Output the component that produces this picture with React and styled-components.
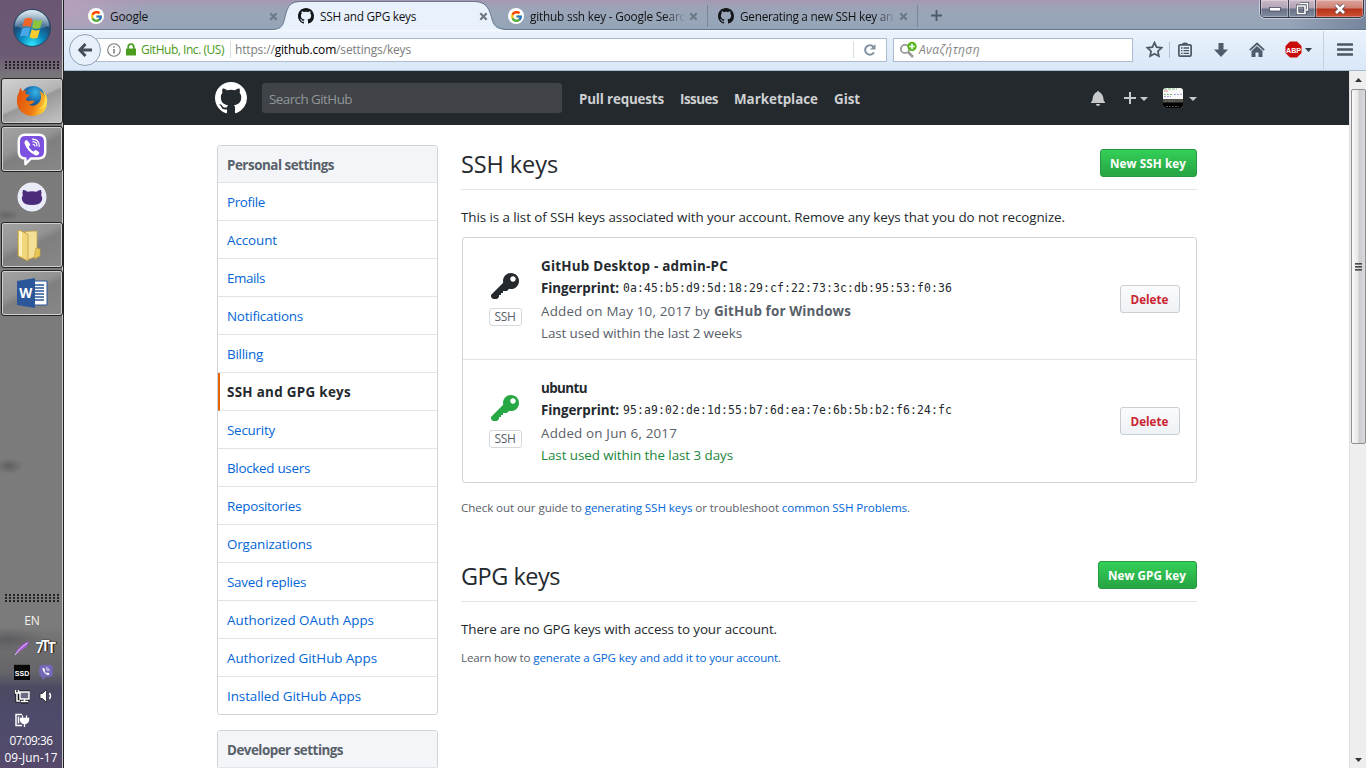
import React, { useLayoutEffect, useRef, useState } from "react";
import styled, { createGlobalStyle, css } from "styled-components";
import { FcGoogle } from "react-icons/fc";

const GlobalStyle = createGlobalStyle`
  * { box-sizing: border-box; }
  html, body { margin: 0; padding: 0; background: #fff; }
  body { font-family: "Open Sans", "Noto Sans", sans-serif; font-size: 13.4px; color: #24292e; overflow: hidden; }
`;

/* Text run whose tracking is adjusted so that it fills a set width. */
const Run = styled.span`
  display: inline-block;
  white-space: nowrap;
`;
function Fit({ w, children, ...rest }) {
  const ref = useRef(null);
  const [spacing, setSpacing] = useState(0);
  useLayoutEffect(() => {
    const el = ref.current;
    el.style.letterSpacing = "0px";
    const natural = el.getBoundingClientRect().width;
    const value = (w - natural) / el.textContent.length;
    el.style.letterSpacing = `${value}px`;
    setSpacing(value);
  }, [w, children]);
  return (
    <Run ref={ref} style={{ letterSpacing: spacing }} {...rest}>
      {children}
    </Run>
  );
}

const Screen = styled.div`
  display: flex;
  width: 1366px;
  height: 768px;
  overflow: hidden;
`;

/* ---------- Taskbar ---------- */
const Taskbar = styled.aside`
  display: flex;
  flex-direction: column;
  align-items: center;
  flex: none;
  width: 64px;
  height: 768px;
  border-right: 1px solid #222;
  box-shadow: inset -1px 0 0 #c9c9c9;
  padding-left: 1px;
  background:
    radial-gradient(ellipse 14px 8px at 9px 466px, #606060, transparent),
    radial-gradient(ellipse 40px 12px at 8px 640px, #5e5c5f, transparent),
    radial-gradient(ellipse 14px 6px at 6px 215px, #666, transparent),
    linear-gradient(#695673 0, #6b5a74 55px, #787379 74px, #7b7b7b 90px, #7b7b7b 625px, #6d6d6f 650px, #65656a 672px, #4a4a62 688px, #4c4b6b 715px, #56496b 768px);
`;
const StartOrb = styled.div`
  height: 61px;
  padding-top: 9px;
`;
const Grip = styled.div`
  width: 54px;
  height: 9px;
  flex: none;
  background-image: radial-gradient(circle at 1px 1px, #262328 1px, transparent 1.4px);
  background-size: 4px 3px;
  margin-bottom: ${(p) => p.$gap || 0}px;
`;
const Task = styled.div`
  display: flex;
  align-items: center;
  justify-content: center;
  flex: none;
  width: 62px;
  height: 46px;
  margin-bottom: 2px;
  border-radius: 3px;
  ${(p) =>
    p.$open &&
    css`
      border: 1px solid #262626;
      box-shadow: inset 0 0 0 1px #cfcfcf;
      background: ${p.$active
        ? "linear-gradient(155deg, #d2d2d2 0, #b4b4b4 48%, #989898 52%, #c4c4c4 100%)"
        : "linear-gradient(155deg, #a4a4a4 0, #939393 40%, #7f7f7f 52%, #888 100%)"};
    `}
`;
const TaskGap = styled.div`
  flex: 1;
`;
const Lang = styled.div`
  height: 33px;
  line-height: 36px;
  font-size: 12px;
  color: #f4f1ea;
`;
const Tray = styled.div`
  display: grid;
  grid-template-columns: 24px 24px;
  grid-auto-rows: 24px;
  place-items: center;
  margin-left: 4px;
`;
const Clock = styled.div`
  height: 36px;
  margin-right: 2px;
  font-size: 11.8px;
  line-height: 17px;
  color: #fff;
  text-align: center;
  white-space: nowrap;
`;
const SsdChip = styled.div`
  width: 16px;
  height: 16px;
  background: #080808;
  border-top: 1px solid #555;
  color: #fff;
  font: bold 7px/17px "Liberation Sans", sans-serif;
  text-align: center;
`;
const SevenTT = styled.div`
  color: #fff;
  font: bold 14px/16px "Roboto", sans-serif;
  letter-spacing: -2.4px;
  margin-left: -3px;
  text-shadow: 0 0 1px #000, 1px 0 1px #000;
  span { display: inline-block; transform: translateY(${(p) => p.$lift || 0}px); }
`;

/* ---------- Browser chrome ---------- */
const Browser = styled.div`
  display: flex;
  flex-direction: column;
  flex: 1;
  min-width: 0;
`;
const TabBar = styled.div`
  display: flex;
  height: 30px;
  flex: none;
  padding-left: 14px;
  border-bottom: 1px solid #66788e;
  background:
    radial-gradient(ellipse 90px 50px at 0 8px, #b7a0bb, transparent),
    linear-gradient(90deg, transparent 94%, rgba(60, 75, 105, 0.35)),
    linear-gradient(#a697b2 0, #9ea0b6 5px, #9aa5b8 12px, #94a5b8 29px);
`;
const TabBox = styled.div`
  position: relative;
  display: flex;
  align-items: center;
  width: 210px;
  height: 30px;
  padding: 2px 0 0 10px;
  font-size: 11.8px;
  color: #111;
  ${(p) =>
    p.$separator &&
    css`
      &::after {
        content: "";
        width: 1px;
        height: 22px;
        background: #76879a;
        margin-left: 9px;
      }
    `}
`;
const TabShape = styled.svg`
  position: absolute;
  left: -16px;
  top: 0;
`;
const TabIcon = styled.div`
  position: relative;
  display: flex;
  align-items: center;
  justify-content: center;
  width: 16px;
  height: 16px;
  border-radius: 8px;
  background: ${(p) => (p.$disc ? "#fff" : "transparent")};
`;
const TabTitle = styled.div`
  position: relative;
  width: 156px;
  margin-left: 6px;
  white-space: nowrap;
  line-height: 18px;
  margin-top: -1px;
  ${(p) => p.$fade && css`mask-image: linear-gradient(90deg, #000 86%, transparent 100%);`}
`;
const CloseIcon = styled.svg`
  position: relative;
  margin-left: 3px;
`;
const NewTab = styled.div`
  display: flex;
  align-items: center;
  padding: 2px 0 0 13px;
`;
const WindowControls = styled.div`
  display: flex;
  margin-left: auto;
  margin-right: 2px;
  height: 18px;
  border: 1px solid #33394a;
  border-top: 0;
  border-radius: 0 0 5px 5px;
  overflow: hidden;
  box-shadow: 0 0 0 1px rgba(255, 255, 255, 0.45);
`;
const WinButton = styled.div`
  display: flex;
  align-items: center;
  justify-content: center;
  width: ${(p) => p.$w}px;
  border-right: ${(p) => (p.$close ? "0" : "1px solid #3c4252")};
  box-shadow: inset 0 0 0 1px rgba(255, 255, 255, 0.3);
  background: ${(p) =>
    p.$close
      ? "linear-gradient(#dda39c 0, #cf8175 8px, #b8321b 9px, #cb5332 100%)"
      : "linear-gradient(#ccb8c7 0, #b0a5b5 8px, #6b7186 9px, #7f8ba0 100%)"};
`;

const NavBar = styled.div`
  display: flex;
  align-items: center;
  height: 41px;
  flex: none;
  padding: 0 0 1px 5px;
  background: linear-gradient(#f7fbff 0, #e9f2fc 2px, #d9e7f8 100%);
  border-bottom: 1px solid #a6bad0;
`;
const Back = styled.div`
  position: relative;
  z-index: 1;
  flex: none;
  display: flex;
  align-items: center;
  justify-content: center;
  width: 32px;
  height: 32px;
  border: 1px solid #8fa1b6;
  border-radius: 50%;
  background: #e8f1fb;
`;
const UrlBox = styled.div`
  display: flex;
  align-items: center;
  flex: none;
  width: 791px;
  height: 24px;
  margin-left: -5px;
  padding-left: 10px;
  background: #fff;
  border: 1px solid #a9bcd1;
  font-size: 12px;
  line-height: 20px;
  color: #7c7c7c;
`;
const Identity = styled.div`
  display: flex;
  align-items: center;
  color: #4a9a21;
  margin-right: 6px;
  gap: 5px;
`;
const Rule = styled.div`
  flex: none;
  width: 1px;
  height: ${(p) => p.$h}px;
  background: ${(p) => p.$c || "#d8dde3"};
`;
const Address = styled.div`
  flex: 1;
  padding: 1px 0 0 4px;
  b { font-weight: 400; color: #000; }
`;
const Reload = styled.div`
  display: flex;
  width: 32px;
  justify-content: center;
`;
const SearchBox = styled.div`
  display: flex;
  align-items: center;
  flex: none;
  width: 240px;
  height: 24px;
  margin-left: 6px;
  padding-left: 5px;
  background: #fff;
  border: 1px solid #a9bcd1;
  color: #858585;
  font-size: 12px;
  font-style: italic;
`;
const Tools = styled.div`
  display: flex;
  align-items: center;
  flex: none;
  height: 40px;
  padding-left: 12px;
  svg { display: block; }
`;
const Tool = styled.div`
  flex: none;
  width: ${(p) => p.$w || 18}px;
  margin-right: ${(p) => p.$r || 0}px;
  display: flex;
  align-items: center;
  justify-content: center;
`;

/* ---------- Page ---------- */
const Viewport = styled.div`
  display: flex;
  flex: 1;
  min-height: 0;
`;
const Page = styled.div`
  width: 1285px;
  height: 697px;
  overflow: hidden;
  background: #fff;
`;
const Header = styled.header`
  display: flex;
  align-items: center;
  height: 54px;
  padding: 0 152px 0 151px;
  background: #24292e;
`;
const HeaderSearch = styled.div`
  width: 300px;
  height: 30px;
  margin-left: 15px;
  padding-left: 7px;
  border-radius: 3px;
  background: #404448;
  color: #939699;
  line-height: 32px;
`;
const HeaderNav = styled.nav`
  display: flex;
  gap: 16px;
  margin-left: 17px;
  padding-top: 2px;
  font-weight: 700;
  color: #ced0d1;
`;
const HeaderUser = styled.div`
  display: flex;
  align-items: center;
  margin-left: auto;
  svg { display: block; }
`;
const AddIcon = styled.svg`
  margin-left: 19px;
`;
const Caret = styled.div`
  width: 0;
  border: 4px solid transparent;
  border-top-color: #c8c9cb;
  border-bottom: 0;
  margin-left: ${(p) => p.$l}px;
  margin-top: 1px;
`;
const Columns = styled.div`
  display: flex;
  padding: 20px 152px 0 153px;
`;
const Sidebar = styled.div`
  width: 221px;
  flex: none;
`;
const Menu = styled.div`
  border: 1px solid #d1d5da;
  border-radius: 3px;
  margin-bottom: 15px;
  overflow: hidden;
`;
const MenuHeading = styled.div`
  height: 37px;
  padding-left: 9px;
  line-height: 38px;
  font-weight: 700;
  color: #586069;
  background: #f3f5f8;
  border-bottom: 1px solid #e1e4e8;
`;
const MenuItem = styled.div`
  height: 38px;
  line-height: 38px;
  padding-left: ${(p) => (p.$current ? 7 : 9)}px;
  border-left: ${(p) => (p.$current ? "2px solid #e36209" : "0")};
  border-bottom: 1px solid #e1e4e8;
  color: ${(p) => (p.$current ? "#24292e" : "#0366d6")};
  font-weight: ${(p) => (p.$current ? 700 : 400)};
  &:last-child { border-bottom: 0; height: 37px; }
`;
const Main = styled.main`
  width: 736px;
  margin-left: 23px;
`;
const Subhead = styled.div`
  display: flex;
  align-items: flex-start;
  justify-content: space-between;
  height: 45px;
  padding-top: 4px;
  border-bottom: 1px solid #e1e4e8;
  margin-top: ${(p) => p.$top || 0}px;
`;
const Title = styled.h2`
  margin: 0;
  font-size: 23.5px;
  line-height: 31px;
  font-weight: 400;
`;
const Button = styled.div`
  width: ${(p) => p.$w}px;
  height: 28px;
  padding-right: 1px;
  text-align: center;
  line-height: 26px;
  font-size: 11.7px;
  font-weight: 700;
  border-radius: 3px;
  ${(p) =>
    p.$danger
      ? css`
          color: #cb2431;
          border: 1px solid #c9cdd1;
          background: linear-gradient(#fafbfc, #eff3f6 90%);
        `
      : css`
          color: #fff;
          border: 1px solid #269a41;
          background: linear-gradient(#34d058, #28a745 90%);
        `}
`;
const Paragraph = styled.p`
  margin: ${(p) => p.$top}px 0 0;
  line-height: 20px;
`;
const Note = styled.p`
  margin: ${(p) => p.$top}px 0 0;
  font-size: 11.6px;
  line-height: 18px;
  color: #586069;
  white-space: pre;
`;
const Link = styled.span`
  color: #0366d6;
`;
const KeyList = styled.div`
  margin: 10px 0 0 1px;
  border: 1px solid #d1d5da;
  border-radius: 3px;
`;
const KeyRow = styled.div`
  display: flex;
  height: ${(p) => p.$h}px;
  padding: 17px 16px 0 26px;
  & + & { border-top: 1px solid #e1e4e8; }
`;
const KeyKind = styled.div`
  display: flex;
  flex-direction: column;
  align-items: center;
  width: 33px;
  padding-top: 16px;
  svg { display: block; margin-right: 2px; }
`;
const KindBadge = styled.div`
  width: 33px;
  height: 18px;
  padding-right: 1px;
  margin-top: 5px;
  border: 1px solid #d5d8dc;
  border-radius: 3px;
  color: #586069;
  font-size: 12px;
  line-height: 16px;
  text-align: center;
`;
const KeyText = styled.div`
  flex: 1;
  margin-left: 19px;
  line-height: 22.3px;
`;
const KeyLine = styled.div`
  display: flex;
  gap: 4px;
  height: 22.3px;
  color: ${(p) => p.$color || "#586069"};
  font-weight: ${(p) => (p.$bold ? 700 : 400)};
`;
const Hash = styled.code`
  font-family: "DejaVu Sans Mono", monospace;
  font-size: 11.4px;
`;
const RowAction = styled.div`
  padding-top: 30px;
`;

const Scrollbar = styled.div`
  display: flex;
  flex-direction: column;
  align-items: center;
  width: 17px;
  background: #eeeeef;
  border-left: 1px solid #e0e0e2;
`;
const ScrollArrow = styled.div`
  display: flex;
  align-items: center;
  justify-content: center;
  height: 17px;
`;
const Thumb = styled.div`
  display: flex;
  flex-direction: column;
  align-items: center;
  justify-content: center;
  gap: 1px;
  width: 15px;
  height: 355px;
  margin-top: 1px;
  border: 1px solid #8f8f92;
  border-radius: 2px;
  background: linear-gradient(90deg, #fafafa 0, #e7e7e9 45%, #cdcdd1 55%, #d8d8dc 100%);
  i { width: 7px; height: 2px; background: linear-gradient(#333, #999); }
`;
const ScrollSpace = styled.div`
  flex: 1;
`;

const MARK =
  "M8 0C3.58 0 0 3.58 0 8c0 3.54 2.29 6.53 5.47 7.59.4.07.55-.17.55-.38 0-.19-.01-.82-.01-1.49-2.01.37-2.53-.49-2.69-.94-.09-.23-.48-.94-.82-1.13-.28-.15-.68-.52-.01-.53.63-.01 1.08.58 1.23.82.72 1.21 1.87.87 2.33.66.07-.52.28-.87.51-1.07-1.78-.2-3.64-.89-3.64-3.95 0-.87.31-1.59.82-2.15-.08-.2-.36-1.02.08-2.12 0 0 .67-.21 2.2.82.64-.18 1.32-.27 2-.27.68 0 1.36.09 2 .27 1.53-1.04 2.2-.82 2.2-.82.44 1.1.16 1.92.08 2.12.51.56.82 1.27.82 2.15 0 3.07-1.87 3.75-3.65 3.95.29.25.54.73.54 1.48 0 1.07-.01 1.93-.01 2.2 0 .21.15.46.55.38A8.013 8.013 0 0 0 16 8c0-4.42-3.58-8-8-8z";
const Mark = ({ size, color }) => (
  <svg width={size} height={size} viewBox="0 0 16 16" fill={color}>
    <path fillRule="evenodd" d={MARK} />
  </svg>
);
const KeyIcon = ({ color }) => (
  <svg width="28" height="32" viewBox="0 0 14 16" fill={color}>
    <path fillRule="evenodd" d="M12.83 2.17C12.08 1.42 11.14 1.03 10 1c-1.13.03-2.08.42-2.83 1.17S6.04 3.86 6.01 5c0 .3.03.59.09.89L0 12v1l1 1h2l1-1v-1h1v-1h1v-1h2l1.09-1.11c.3.08.59.11.91.11 1.14-.03 2.08-.42 2.83-1.17S13.97 6.14 14 5c-.03-1.14-.42-2.08-1.17-2.83zM11 5.38c-.77 0-1.38-.61-1.38-1.38 0-.77.61-1.38 1.38-1.38.77 0 1.38.61 1.38 1.38 0 .77-.61 1.38-1.38 1.38z" />
  </svg>
);
const ViberIcon = ({ size = 34, fill = "#7d51e0", outline = "#fff" }) => (
  <svg width={size} height={size} viewBox="0 0 34 36">
    <path d="M10 3h14q7 0 7 7v11q0 7-7 7h-8l-6 6v-6q-7 0-7-7V10q0-7 7-7z" fill={fill} stroke={outline} strokeWidth="2.6" strokeLinejoin="round" />
    <path d="M11 8.5c-2 1-2.300 2.500-1.500 4.500 2 5.500 5.500 9 11 11.500 2 .8 3.500-.3 4.300-2.200.2-.7-3.500-3.500-4.300-3.300l-1.700 1.600c-2.300-.8-4.300-2.700-5.200-5.200l1.500-1.600c.3-1-3.300-5.600-4.100-5.300z" fill="#fff" />
    <path d="M17.500 7.500q7 .3 7.200 7.600M18 10.300q4.200.2 4.300 4.500M18.300 13q1.700.1 1.700 1.800" fill="none" stroke="#fff" strokeWidth="1.300" strokeLinecap="round" />
  </svg>
);
const Orb = () => (
  <svg width="40" height="40" viewBox="0 0 40 40">
    <defs>
      <radialGradient id="orb" cx=".5" cy=".95" r=".95">
        <stop offset="0" stopColor="#2fe6ff" />
        <stop offset=".35" stopColor="#0a86bd" />
        <stop offset=".65" stopColor="#1b4b78" />
        <stop offset="1" stopColor="#7fa9c4" />
      </radialGradient>
      <linearGradient id="gloss" x2="0" y2="1">
        <stop offset="0" stopColor="#fff" stopOpacity=".75" />
        <stop offset="1" stopColor="#fff" stopOpacity=".12" />
      </linearGradient>
    </defs>
    <circle cx="20" cy="19" r="18.500" fill="url(#orb)" stroke="#27425d" />
    <path d="M3 17a17 16 0 0 1 34 0q-17 7-34 0z" fill="url(#gloss)" />
    <path d="M12.500 10q4.500-2.500 8 0l-2 8q-4-2.200-8 0z" fill="#f0642a" />
    <path d="M22 10.500q4 2.500 8.500.3l-2.300 8q-4 2-8.200-.3z" fill="#8cc63c" />
    <path d="M10 19.800q4-2.200 8.200 0l-2.200 8q-3.800-2.300-8 0z" fill="#4aa7e8" />
    <path d="M19.700 20.300q4 2.200 8.200.2l-2.200 8q-4 2.200-8.200-.3z" fill="#fccb2f" />
  </svg>
);
const Firefox = () => (
  <svg width="32" height="32" viewBox="0 0 32 32">
    <defs>
      <linearGradient id="fox" x1="0" y1=".3" x2="1" y2=".6">
        <stop offset="0" stopColor="#e2530f" />
        <stop offset=".6" stopColor="#ee7a13" />
        <stop offset="1" stopColor="#ffd83b" />
      </linearGradient>
      <radialGradient id="globe" cx=".6" cy=".25" r=".8">
        <stop offset="0" stopColor="#35b4e8" />
        <stop offset=".5" stopColor="#1665a8" />
        <stop offset="1" stopColor="#0a2a63" />
      </radialGradient>
    </defs>
    <circle cx="17" cy="13.500" r="12.500" fill="url(#globe)" />
    <path d="M3 7q.3-3 2-4.500 0 2.500 1.500 3.700 2-1.200 4.500-.6-2 1.500-1.500 3.400l4 .7q.5 1.300-2.500 2.800-1 1-1 2.500 2 1.500 4.500.7 2.500-.7 4 .5-2 3.300-5.500 3.300 4 2.500 8.500-.5 4-3 3.500-8-.3-3.500-2-5.800 7.500 4.500 8 11.500.3 8-6 12-7 4-14.500 1.300Q2 26 1 18 .5 11 3 7z" fill="url(#fox)" />
    <path d="M26 5.500q4 4.500 3 10-1.200 6.500-6.500 9 8-1 8.700-8.500.2-6.500-5.200-10.500z" fill="#ffe14d" />
  </svg>
);
const Octocat = () => (
  <svg width="30" height="30" viewBox="0 0 30 30">
    <circle cx="15" cy="15" r="14.500" fill="#e9ebf7" />
    <path d="M6 8q2.500-.3 4.500 1.800 4.500-.9 9 0Q21.500 7.700 24 8q.9 2.500.1 5 1.700 2.500.7 5.500-1.700 4.500-9.800 4.500T5.200 18.500q-1-3 .7-5.500Q5 10.500 6 8z" fill="#4c2a7c" />
  </svg>
);
const FolderSvg = styled.svg`
  margin-right: 6px;
`;
const Folder = () => (
  <FolderSvg width="26" height="34" viewBox="0 0 26 34">
    <path d="M9 3.500 21 3v25l-10 4z" fill="#f3df95" stroke="#c5a243" strokeWidth=".7" />
    <path d="M20 20l4 1v7l-6 3z" fill="#e8c655" stroke="#c2a03d" strokeWidth=".7" />
    <path d="M2 2l4 1.200 6 3.300V33l-10-5z" fill="#f2d67c" stroke="#c19b38" strokeWidth=".8" />
    <path d="M3 3l3 1v24.500l-3-1.300z" fill="#fbf0bd" />
  </FolderSvg>
);
const WordIcon = () => (
  <svg width="32" height="32" viewBox="0 0 32 32">
    <path d="M17 4h14v24H17z" fill="#fff" stroke="#2b579a" />
    <path d="M18 8h10M18 11h10M18 14h10M18 17h10M18 20h10M18 23h10" stroke="#2b579a" strokeWidth="1.300" />
    <path d="M1 4 19 1v30L1 28z" fill="#2b579a" />
    <text x="9.700" y="21" fontFamily="Open Sans, sans-serif" fontSize="13.500" fontWeight="700" fill="#fff" textAnchor="middle">W</text>
  </svg>
);
const Close = () => (
  <CloseIcon width="9" height="9" viewBox="0 0 9 9">
    <path d="M1.300 1.300l6.400 6.400M7.700 1.300L1.300 7.700" stroke="#6c7986" strokeWidth="2.200" />
  </CloseIcon>
);

const tabs = [
  { title: "Google", w: 38, google: true },
  { title: "SSH and GPG keys", w: 96, active: true },
  { title: "github ssh key - Google Searc", w: 155, google: true, fade: true, sep: true },
  { title: "Generating a new SSH key an", w: 153, fade: true, sep: true },
];
const menu = [
  ["Profile", 38], ["Account", 50], ["Emails", 38], ["Notifications", 76], ["Billing", 36],
  ["SSH and GPG keys", 124], ["Security", 48], ["Blocked users", 83], ["Repositories", 74],
  ["Organizations", 85], ["Saved replies", 79], ["Authorized OAuth Apps", 147],
  ["Authorized GitHub Apps", 150], ["Installed GitHub Apps", 134],
];

function TabStrip() {
  return (
    <TabBar>
      {tabs.map((t) => (
        <TabBox key={t.title} $separator={t.sep}>
          {t.active && (
            <TabShape width="242" height="30" viewBox="0 0 242 30">
              <path d="M0 30C13 29 11 22 15 10Q18 2 27 2H203Q213 2 217 10C222 22 219 29 236 30z" fill="#e9f2fc" />
              <path d="M0 29.500C13 29 11 22 15 10Q18 1.500 27 1.500H203Q213 1.500 217 10C222 22 219 29 236 29.500" fill="none" stroke="#66788e" />
            </TabShape>
          )}
          <TabIcon $disc={t.google}>
            {t.google ? <FcGoogle size={13} /> : <Mark size={16} color="#14171a" />}
          </TabIcon>
          <TabTitle $fade={t.fade}><Fit w={t.w}>{t.title}</Fit></TabTitle>
          <Close />
        </TabBox>
      ))}
      <NewTab>
        <svg width="11" height="11" viewBox="0 0 11 11"><path d="M5.500 0v11M0 5.500h11" stroke="#4d5a68" strokeWidth="1.800" /></svg>
      </NewTab>
      <WindowControls>
        <WinButton $w={28}>
          <svg width="12" height="6"><rect x=".5" y="1.500" width="11" height="3.500" fill="#fff" stroke="#4a4f60" strokeWidth=".8" /></svg>
        </WinButton>
        <WinButton $w={27}>
          <svg width="13" height="13" viewBox="0 0 13 13"><path d="M4 1.500h7.500V8H10M1.500 4H9v7.500H1.500z" fill="none" stroke="#444a5b" strokeWidth="3" /><path d="M4 1.500h7.500V8H10M1.500 4H9v7.500H1.500z" fill="none" stroke="#fff" strokeWidth="1.600" /></svg>
        </WinButton>
        <WinButton $w={47} $close>
          <svg width="14" height="12" viewBox="0 0 14 12"><path d="M3 2l8 8M11 2l-8 8" stroke="#5a4a52" strokeWidth="4.400" /><path d="M3 2l8 8M11 2l-8 8" stroke="#fff" strokeWidth="2.700" /></svg>
        </WinButton>
      </WindowControls>
    </TabBar>
  );
}

function Toolbar() {
  return (
    <NavBar>
      <Back>
        <svg width="14" height="14" viewBox="0 0 14 14"><path d="M7.500 1 1.800 7l5.700 6M2 7h12" fill="none" stroke="#434e5a" strokeWidth="3" /></svg>
      </Back>
      <UrlBox>
        <Identity>
          <svg width="14" height="14" viewBox="0 0 14 14"><circle cx="7" cy="7" r="6.300" fill="none" stroke="#777" strokeWidth="1.100" /><path d="M7 6v4.500M7 3.200v1.500" stroke="#777" strokeWidth="1.500" /></svg>
          <svg width="10" height="13" viewBox="0 0 10 13"><path d="M2.200 6V4a2.800 2.800 0 0 1 5.600 0v2" fill="none" stroke="#4c9d1f" strokeWidth="1.700" /><rect y="5.500" width="10" height="7" rx=".6" fill="#4c9d1f" /></svg>
          <Fit w={83}>GitHub, Inc. (US)</Fit>
        </Identity>
        <Rule $h={17} />
        <Address><Fit w={176}>https://<b>github.com</b>/settings/keys</Fit></Address>
        <Rule $h={17} />
        <Reload>
          <svg width="12" height="12" viewBox="0 0 12 12"><path d="M10 8.200A4.700 4.700 0 1 1 9.500 3" fill="none" stroke="#8292a3" strokeWidth="2" /><path d="M11.500 0v5.500H6z" fill="#8292a3" /></svg>
        </Reload>
      </UrlBox>
      <SearchBox>
        <svg width="20" height="18" viewBox="0 0 20 18"><circle cx="6" cy="8" r="4.200" fill="none" stroke="#989898" strokeWidth="1.800" /><path d="M9 11l5 5" stroke="#989898" strokeWidth="2.500" /><circle cx="13" cy="5.500" r="4.700" fill="#5ab620" /><path d="M13 2.800v5.400M10.300 5.500h5.400" stroke="#fff" strokeWidth="1.500" /></svg>
        <Fit w={61}>Αναζήτηση</Fit>
      </SearchBox>
      <Tools>
        <Tool $r={6}>
          <svg width="17" height="17" viewBox="0 0 17 17"><path d="M8.500 1.600l2.100 4.600 5 .6-3.700 3.400 1 5-4.400-2.500-4.400 2.500 1-5L1.400 6.800l5-.6z" fill="none" stroke="#4b5864" strokeWidth="1.700" /></svg>
        </Tool>
        <Rule $h={16} $c="#b3c1d0" />
        <Tool $w={30} $r={3}>
          <svg width="14" height="15" viewBox="0 0 14 15"><rect x=".9" y="2.900" width="12.200" height="11.200" rx="1.200" fill="none" stroke="#4b5864" strokeWidth="1.700" /><path d="M4 3V1.500q3-2 6 0V3z" fill="#4b5864" /><path d="M3 6h1.500M5.500 6H11M3 8.700h1.500M5.500 8.700H11M3 11.400h1.500M5.500 11.400H11" stroke="#4b5864" strokeWidth="1.300" /></svg>
        </Tool>
        <Tool $w={36}>
          <svg width="14" height="14" viewBox="0 0 14 14"><path d="M4.500 0h5v6.500H14L7 14 0 6.500h4.500z" fill="#4f5d6a" /></svg>
        </Tool>
        <Tool $w={36}>
          <svg width="16" height="15" viewBox="0 0 16 15"><path d="M.8 8.200 8 1.500l7.200 6.700" fill="none" stroke="#4f5d6a" strokeWidth="1.800" /><path d="M2.500 9 8 4l5.500 5v6H9.500v-4.500h-3V15h-4z" fill="#4f5d6a" /></svg>
        </Tool>
        <Tool $w={36} $r={-6}>
          <svg width="17" height="17" viewBox="0 0 17 17"><path d="M5 .5h7L16.500 5v7L12 16.500H5L.5 12V5z" fill="#c90a0a" /><text x="8.500" y="11.500" fontFamily="Liberation Sans, sans-serif" fontSize="8" fontWeight="700" fill="#fff" textAnchor="middle" textLength="15" lengthAdjust="spacingAndGlyphs">ABP</text></svg>
        </Tool>
        <Tool $w={7} $r={11}>
          <svg width="7" height="4" viewBox="0 0 7 4"><path d="M0 0h7L3.500 4z" fill="#333e49" /></svg>
        </Tool>
        <Rule $h={38} $c="#c3d0de" />
        <Tool $w={42}>
          <svg width="16" height="13" viewBox="0 0 16 13"><path d="M1 1.500h14M1 6.500h14M1 11.500h14" stroke="#4b5864" strokeWidth="2.600" strokeLinecap="round" /></svg>
        </Tool>
      </Tools>
    </NavBar>
  );
}

function KeyEntry({ color, height, name, nameW, hash, children }) {
  return (
    <KeyRow $h={height}>
      <KeyKind>
        <KeyIcon color={color} />
        <KindBadge><Fit w={21}>SSH</Fit></KindBadge>
      </KeyKind>
      <KeyText>
        <KeyLine $bold $color="#24292e"><Fit w={nameW}>{name}</Fit></KeyLine>
        <KeyLine $color="#24292e">
          <b><Fit w={78}>Fingerprint:</Fit></b>
          <Hash><Fit w={329}>{hash}</Fit></Hash>
        </KeyLine>
        {children}
      </KeyText>
      <RowAction>
        <Button $danger $w={60}><Fit w={38}>Delete</Fit></Button>
      </RowAction>
    </KeyRow>
  );
}

const AvatarSvg = styled.svg`
  margin-left: 15px;
  border-radius: 3px;
`;
const Avatar = () => (
  <AvatarSvg width="20" height="20" viewBox="0 0 20 20">
    <rect width="20" height="20" fill="#fafafa" />
    <path d="M1 1h13" stroke="#76c276" strokeWidth="1.200" strokeDasharray="3 1" />
    <path d="M1 3h4" stroke="#d98b8b" />
    <path d="M1 6.500h8" stroke="#79b879" strokeDasharray="2 1" />
    <path d="M11 6.500h8M1 8.500h7" stroke="#a5a5e4" strokeDasharray="2 1" />
    <rect y="11" width="20" height="4" fill="#55534e" />
    <rect y="14.500" width="20" height="5.500" fill="#000" />
    <path d="M2 13h10M3 18.500h13" stroke="#777" strokeWidth=".7" strokeDasharray="2 1" />
  </AvatarSvg>
);

function GitHubPage() {
  return (
    <Page>
      <Header>
        <Mark size={32} color="#fff" />
        <HeaderSearch><Fit w={83}>Search GitHub</Fit></HeaderSearch>
        <HeaderNav>
          <Fit w={85}>Pull requests</Fit>
          <Fit w={38}>Issues</Fit>
          <Fit w={84}>Marketplace</Fit>
          <Fit w={26}>Gist</Fit>
        </HeaderNav>
        <HeaderUser>
          <svg width="14" height="16" viewBox="0 0 14 16" fill="#c8c9cb"><path d="M14 12v1H0v-1l.73-.58c.77-.77.81-2.550 1.190-4.420C2.690 3.230 6 2 6 2c0-.55.45-1 1-1s1 .45 1 1c0 0 3.390 1.230 4.160 5 .38 1.880.42 3.660 1.190 4.420l.66.58H14zm-7 4c1.110 0 2-.89 2-2H5c0 1.110.89 2 2 2z" /></svg>
          <AddIcon width="12" height="16" viewBox="0 0 12 16" fill="#c8c9cb"><path d="M12 9H7v5H5V9H0V7h5V2h2v5h5z" /></AddIcon>
          <Caret $l={4} />
          <Avatar />
          <Caret $l={6} />
        </HeaderUser>
      </Header>
      <Columns>
        <Sidebar>
          <Menu>
            <MenuHeading><Fit w={107}>Personal settings</Fit></MenuHeading>
            {menu.map(([label, w]) => (
              <MenuItem key={label} $current={label === "SSH and GPG keys"}><Fit w={w}>{label}</Fit></MenuItem>
            ))}
          </Menu>
          <Menu><MenuHeading><Fit w={116}>Developer settings</Fit></MenuHeading></Menu>
        </Sidebar>
        <Main>
          <Subhead>
            <Title><Fit w={97}>SSH keys</Fit></Title>
            <Button $w={97}><Fit w={76}>New SSH key</Fit></Button>
          </Subhead>
          <Paragraph $top={17}><Fit w={604}>This is a list of SSH keys associated with your account. Remove any keys that you do not recognize.</Fit></Paragraph>
          <KeyList>
            <KeyEntry color="#24292e" height={121} name="GitHub Desktop - admin-PC" nameW={187} hash="0a:45:b5:d9:5d:18:29:cf:22:73:3c:db:95:53:f0:36">
              <KeyLine><Fit w={169}>Added on May 10, 2017 by</Fit><b><Fit w={137}>GitHub for Windows</Fit></b></KeyLine>
              <KeyLine><Fit w={201}>Last used within the last 2 weeks</Fit></KeyLine>
            </KeyEntry>
            <KeyEntry color="#28a745" height={123} name="ubuntu" nameW={46} hash="95:a9:02:de:1d:55:b7:6d:ea:7e:6b:5b:b2:f6:24:fc">
              <KeyLine><Fit w={136}>Added on Jun 6, 2017</Fit></KeyLine>
              <KeyLine $color="#22863a"><Fit w={192}>Last used within the last 3 days</Fit></KeyLine>
            </KeyEntry>
          </KeyList>
          <Note $top={16}>
            <Fit w={449}>Check out our guide to <Link>generating SSH keys</Link> or troubleshoot <Link>common SSH Problems</Link>.</Fit>
          </Note>
          <Subhead $top={40}>
            <Title><Fit w={99}>GPG keys</Fit></Title>
            <Button $w={99}><Fit w={78}>New GPG key</Fit></Button>
          </Subhead>
          <Paragraph $top={17}><Fit w={316}>There are no GPG keys with access to your account.</Fit></Paragraph>
          <Note $top={10}>
            <Fit w={320}>Learn how to <Link>generate a GPG key and add it to your account</Link>.</Fit>
          </Note>
        </Main>
      </Columns>
    </Page>
  );
}

function TrayArea() {
  return (
    <Tray>
      <svg width="16" height="16" viewBox="0 0 16 16"><path d="M1 15Q3 6 15 1q-1 6-6 8.500T1 15z" fill="#a45ad0" /><path d="M1 15Q6 8 13 3" stroke="#e5c5f5" fill="none" /></svg>
      <SevenTT $lift={-2}>7<span>T</span>T</SevenTT>
      <SsdChip>SSD</SsdChip>
      <ViberIcon size={16} fill="#7468b8" outline="#7468b8" />
      <svg width="16" height="16" viewBox="0 0 16 16"><path d="M6 4h9v7H6zM7 14h7M10.500 11v3M1 2v3h4V2M3 5v8h3" fill="none" stroke="#111" strokeWidth="3" /><path d="M6 4h9v7H6z" fill="#6a6b83" /><path d="M6 4h9v7H6zM7 13.500h7M10.500 11v3M1.500 2v3h3V2M3 5v8h3" fill="none" stroke="#fff" strokeWidth="1.500" /></svg>
      <svg width="16" height="16" viewBox="0 0 16 16"><path d="M2 5.500h2.500L8.500 1.500v13l-4-4H2z" fill="#fff" stroke="#222" strokeWidth=".8" /><path d="M11.500 5q2 3 0 6" stroke="#fff" fill="none" strokeWidth="1.400" /></svg>
      <svg width="16" height="16" viewBox="0 0 16 16"><path d="M8 2.500H2v11h6" fill="none" stroke="#fff" strokeWidth="1.500" /><path d="M4.500 4.500v7" stroke="#fff" strokeWidth="1.500" /><path d="M6.500 6.500h8v2q-1 3-4 3t-4-3zM8.500 3.500v3M12.500 3.500v3M10.500 11v4" fill="#fff" stroke="#fff" strokeWidth="1.300" /></svg>
    </Tray>
  );
}

export default function App() {
  return (
    <Screen>
      <GlobalStyle />
      <Taskbar>
        <StartOrb><Orb /></StartOrb>
        <Grip $gap={8} />
        <Task $open $active><Firefox /></Task>
        <Task $open><ViberIcon /></Task>
        <Task><Octocat /></Task>
        <Task $open><Folder /></Task>
        <Task $open><WordIcon /></Task>
        <TaskGap />
        <Grip />
        <Lang>EN</Lang>
        <TrayArea />
        <Clock>
          <Fit w={43}>07:09:36</Fit>
          <br />
          <Fit w={53}>09-Jun-17</Fit>
        </Clock>
      </Taskbar>
      <Browser>
        <TabStrip />
        <Toolbar />
        <Viewport>
          <GitHubPage />
          <Scrollbar>
            <ScrollArrow><svg width="7" height="4"><path d="M0 4h7L3.500 0z" fill="#333" /></svg></ScrollArrow>
            <Thumb><i /><i /><i /></Thumb>
            <ScrollSpace />
            <ScrollArrow><svg width="7" height="4"><path d="M0 0h7L3.500 4z" fill="#333" /></svg></ScrollArrow>
          </Scrollbar>
        </Viewport>
      </Browser>
    </Screen>
  );
}
